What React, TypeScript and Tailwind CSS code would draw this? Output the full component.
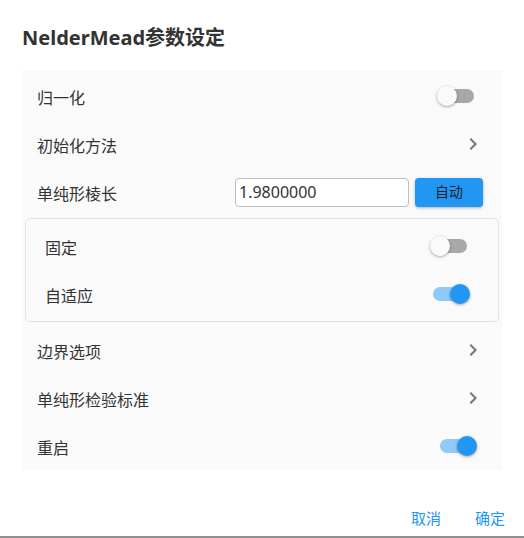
import { useState } from "react"

function Toggle({ on }: { on: boolean }) {
  return (
    <span className="relative inline-block w-[34px] h-[14px]">
      <span
        className={[
          "block w-full h-full rounded-full",
          on ? "bg-[#90caf9]" : "bg-[#a8a8a8]",
        ].join(" ")}
      />
      <span
        className={[
          "absolute top-[-3px] w-[20px] h-[20px] rounded-full shadow-[0_1px_3px_rgba(0,0,0,0.35)]",
          on ? "left-[17px] bg-[#2196f3]" : "left-[-3px] bg-[#fafafa]",
        ].join(" ")}
      />
    </span>
  )
}

function Chevron() {
  return (
    <svg width="24" height="24" viewBox="0 0 24 24" fill="#757575" aria-hidden="true">
      <path d="M10 6 8.59 7.41 13.17 12l-4.58 4.59L10 18l6-6z" />
    </svg>
  )
}

function Row({ label, children, inner }: { label: string; children: React.ReactNode; inner?: boolean }) {
  return (
    <div className={["flex items-center justify-between h-12", inner ? "pl-[19px]" : "pl-[15px]"].join(" ")}>
      <span className="pt-[3px] text-base text-[#333333]">{label}</span>
      {children}
    </div>
  )
}

export default function App() {
  const [value] = useState("1.9800000")

  return (
    <div className="h-[538px] w-[524px] bg-white flex flex-col border-b-2 border-[#8f8f8f] font-['Noto_Sans','Noto_Sans_CJK_SC',sans-serif]">
      <h1 className="pt-[24px] pl-[22px] text-[20px] leading-[28px] font-bold text-[#333333]">
        NelderMead参数设定
      </h1>

      <div className="mt-[18px] mx-[22px] bg-[#fafafa] pt-[2px]">
        <Row label="归一化">
          <span className="mr-[28px] flex"><Toggle on={false} /></span>
        </Row>
        <Row label="初始化方法">
          <span className="mr-[17px] flex"><Chevron /></span>
        </Row>
        <Row label="单纯形棱长">
          <div className="flex items-center gap-[6px] mr-[19px]">
            <input
              readOnly
              value={value}
              className="w-[174px] h-[29px] border border-[#bdbdbd] rounded-[4px] bg-white pl-[3px] text-base text-[#333333] outline-none"
            />
            <button
              type="button"
              className="w-[68px] h-[29px] rounded-[4px] bg-[#2196f3] text-sm text-[#222222] shadow-[0_1px_3px_rgba(0,0,0,0.3)]"
            >
              自动
            </button>
          </div>
        </Row>

        {/* 棱长模式 */}
        <div className="mt-[2px] mx-[3px] border border-[#e3e3e3] rounded-[5px] py-[3px]">
          <Row label="固定" inner>
            <span className="mr-[31px] flex"><Toggle on={false} /></span>
          </Row>
          <Row label="自适应" inner>
            <span className="mr-[31px] flex"><Toggle on={true} /></span>
          </Row>
        </div>

        <div className="mt-[4px]">
          <Row label="边界选项">
            <span className="mr-[17px] flex"><Chevron /></span>
          </Row>
          <Row label="单纯形检验标准">
            <span className="mr-[17px] flex"><Chevron /></span>
          </Row>
          <Row label="重启">
            <span className="mr-[28px] flex"><Toggle on={true} /></span>
          </Row>
        </div>
      </div>

      <div className="mt-auto mb-[7px] flex justify-end gap-[34px] pr-[19px]">
        <button type="button" className="text-[15px] leading-[22px] text-[#2196f3]">取消</button>
        <button type="button" className="text-[15px] leading-[22px] text-[#2196f3]">确定</button>
      </div>
    </div>
  )
}
